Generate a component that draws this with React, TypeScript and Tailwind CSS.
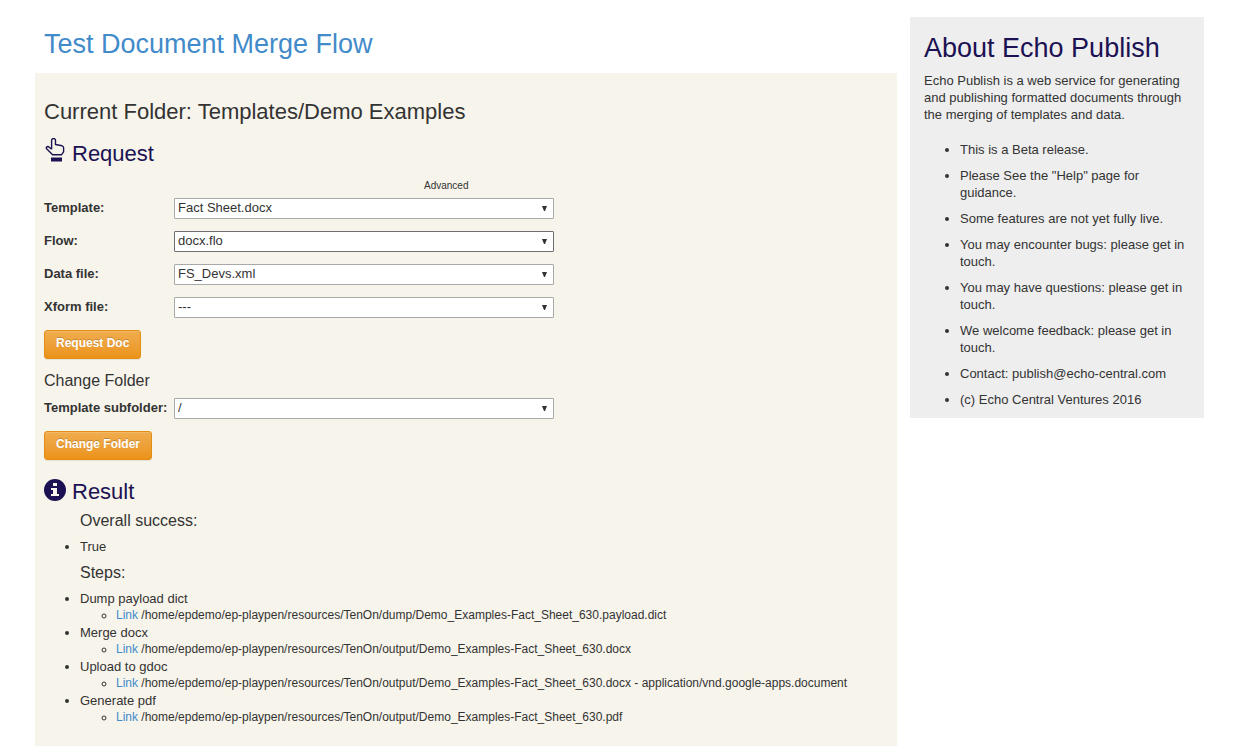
import React from "react";

const steps = [
  { name: "Dump payload dict", path: "/home/epdemo/ep-playpen/resources/TenOn/dump/Demo_Examples-Fact_Sheet_630.payload.dict" },
  { name: "Merge docx", path: "/home/epdemo/ep-playpen/resources/TenOn/output/Demo_Examples-Fact_Sheet_630.docx" },
  { name: "Upload to gdoc", path: "/home/epdemo/ep-playpen/resources/TenOn/output/Demo_Examples-Fact_Sheet_630.docx - application/vnd.google-apps.document" },
  { name: "Generate pdf", path: "/home/epdemo/ep-playpen/resources/TenOn/output/Demo_Examples-Fact_Sheet_630.pdf" },
];

const notes = [
  "This is a Beta release.",
  'Please See the "Help" page for guidance.',
  "Some features are not yet fully live.",
  "You may encounter bugs: please get in touch.",
  "You may have questions: please get in touch.",
  "We welcome feedback: please get in touch.",
  "Contact: publish@echo-central.com",
  "(c) Echo Central Ventures 2016",
];

function SelectRow({ id, label, value, dark = false }: { id: string; label: string; value: string; dark?: boolean }) {
  return (
    <div className="flex items-center">
      <label htmlFor={id} className="w-[130px] shrink-0 pb-[2px] font-bold">
        {label}
      </label>
      <div className="relative w-[380px]">
        <select
          id={id}
          defaultValue={value}
          className={
            "block h-[21px] w-full appearance-none rounded-[1px] border bg-white pr-5 pb-[2px] pl-[3px] leading-[17px] " +
            (dark ? "border-[#6f6f6f]" : "border-[#a9a9a9]")
          }
        >
          <option>{value}</option>
        </select>
        <svg viewBox="0 0 5 5" className="pointer-events-none absolute top-2 right-[7px] size-[5px] fill-[#333]" aria-hidden="true">
          <path d="M0 0h5L3 5H2z" />
        </svg>
      </div>
    </div>
  );
}

function OrangeButton({ children }: { children: React.ReactNode }) {
  return (
    <button
      type="button"
      className="mt-3 block h-[29px] rounded-[3px] border border-[#e38d13] bg-linear-to-b from-[#f0ad4e] to-[#eb9316] px-[11px] pb-[2px] text-[12px] font-bold text-white shadow-[inset_0_1px_0_rgba(255,255,255,0.15),0_1px_1px_rgba(0,0,0,0.075)] [text-shadow:0_-1px_0_rgba(0,0,0,0.2)]"
    >
      {children}
    </button>
  );
}

export default function App() {
  return (
    <div className="flex items-start gap-[13px] bg-white pr-[29px] pb-2 pl-[35px] font-['Liberation_Sans',Arial,sans-serif] text-[13px] leading-[17px] text-[#333]">
      <main className="min-w-0 flex-1 pt-7">
        <h1 className="mb-[13px] pl-[9px] text-[27px] leading-8 text-[#428bca]">Test Document Merge Flow</h1>
        <div className="bg-[#f7f4eb] px-[9px] pt-[27px] pb-5">
          <h2 className="text-[22px] leading-6">Current Folder: Templates/Demo Examples</h2>

          <h2 className="mt-[14px] flex items-start gap-[6px] text-[22px] leading-6 text-[#1c1253]">
            <svg viewBox="0 0 22 26" className="h-[26px] w-[22px]" aria-hidden="true">
              <path
                d="M7.6 11.2V2.2c0-2.2 3.9-2.2 3.9 0v4.3l6.6 1.3c1 .3 1.5.9 1.5 1.9v4.1l-2.2 3H8.6L2.4 10.6c-.6-1.9 1.6-2.6 2.8-1.4l2.4 2"
                fill="none"
                stroke="currentColor"
                strokeWidth="1.4"
                strokeLinejoin="round"
              />
              <path d="M7 19.5h11v4H7z" fill="currentColor" />
            </svg>
            <span className="pt-1">Request</span>
          </h2>

          <form onSubmit={(e) => e.preventDefault()}>
            <div className="mt-3 w-[510px] pl-[380px] text-[10px] leading-4">Advanced</div>
            <div className="mt-1 flex flex-col gap-3">
              <SelectRow id="template" label="Template:" value="Fact Sheet.docx" />
              <SelectRow id="flow" label="Flow:" value="docx.flo" dark />
              <SelectRow id="data" label="Data file:" value="FS_Devs.xml" />
              <SelectRow id="xform" label="Xform file:" value="---" />
            </div>
            <OrangeButton>Request Doc</OrangeButton>
          </form>

          <form onSubmit={(e) => e.preventDefault()}>
            <h3 className="mt-3 mb-[7px] text-[16px] leading-5">Change Folder</h3>
            <SelectRow id="subfolder" label="Template subfolder:" value="/" />
            <OrangeButton>Change Folder</OrangeButton>
          </form>

          <h2 className="mt-[19px] flex items-center gap-[6px] text-[22px] leading-6 text-[#1c1253]">
            <svg viewBox="0 0 22 22" className="mb-1 size-[22px]" aria-hidden="true">
              <circle cx="11" cy="11" r="11" fill="currentColor" />
              <path d="M9 4h4v3H9zM7 9h6v6h2v2H7v-2h2v-4H7z" fill="#f7f4eb" />
            </svg>
            Result
          </h2>
          <div className="pl-9">
            <h3 className="mt-[6px] mb-[7px] text-[16px] leading-5">Overall success:</h3>
            <ul className="list-disc">
              <li>True</li>
            </ul>
            <h3 className="mt-2 mb-[7px] text-[16px] leading-5">Steps:</h3>
            <ul className="list-disc">
              {steps.map((s) => (
                <li key={s.name}>
                  {s.name}
                  <ul className="list-[circle] pl-9 text-[12px]">
                    <li>
                      <a href="#" className="text-[#428bca]">
                        Link
                      </a>{" "}
                      {s.path}
                    </li>
                  </ul>
                </li>
              ))}
            </ul>
          </div>
        </div>
      </main>

      <aside className="mt-[17px] w-[294px] shrink-0 bg-[#eee] px-[14px] pt-[15px] pb-[10px]">
        <h2 className="mb-2 text-[27px] leading-8 text-[#1c1253]">About Echo Publish</h2>
        <p>Echo Publish is a web service for generating and publishing formatted documents through the merging of templates and data.</p>
        <ul className="mt-[18px] flex list-disc flex-col gap-[9px] pl-9">
          {notes.map((n) => (
            <li key={n}>{n}</li>
          ))}
        </ul>
      </aside>
    </div>
  );
}
